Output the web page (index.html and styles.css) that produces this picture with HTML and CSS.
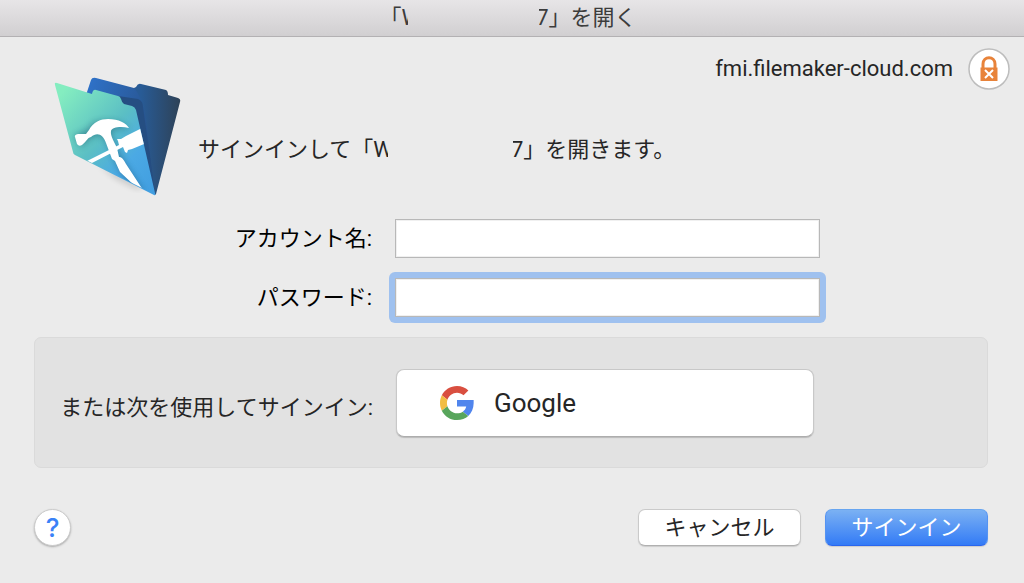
FILE: index.html
```html
<!DOCTYPE html>
<html lang="ja">
<head>
<meta charset="utf-8">
<meta name="viewport" content="width=device-width, initial-scale=1">
<title>サインイン</title>
<link rel="stylesheet" href="styles.css">
</head>
<body>
<header class="titlebar">
  <h1 class="titlebar-text">「<span class="masked masked-title"><span class="mask-start">W</span><span class="mask-end">7</span></span>」を開く</h1>
</header>
<main class="dialog">
  <section class="intro">
    <svg class="app-icon" viewBox="0 0 128 122" aria-hidden="true">
      <defs>
        <linearGradient id="front" x1="0" y1="0" x2="1" y2="1">
          <stop offset="0.08" stop-color="#84edc0"/>
          <stop offset="0.48" stop-color="#5bbfc4"/>
          <stop offset="0.72" stop-color="#4ba9e4"/>
          <stop offset="1" stop-color="#409de0"/>
        </linearGradient>
        <linearGradient id="back" x1="0" y1="0" x2="1" y2="0">
          <stop offset="0.3" stop-color="#285b96"/>
          <stop offset="1" stop-color="#2e4257"/>
        </linearGradient>
        <linearGradient id="middle" x1="0" y1="0" x2="1" y2="0.6">
          <stop offset="0" stop-color="#2f74cd"/>
          <stop offset="1" stop-color="#274d81"/>
        </linearGradient>
        <filter id="soft" x="-20%" y="-20%" width="140%" height="140%"><feGaussianBlur stdDeviation="3"/></filter>
        <clipPath id="face"><path d="M1 7 37 17 39 13 66 21 68 27 81 31 102 119 20 78Z"/></clipPath>
      </defs>
      <path d="M44 88 90 112 82 112 62 102Z" fill="#000" opacity=".22" filter="url(#soft)"/>
      <path d="M78 13 82 11 Q84 7 87 8L112 14Q114 15 114 19L124 22Q127 23 126 26L102 118Q101 120 99 116L70 20Z" fill="url(#back)"/>
      <path d="M33 16 37 4Q38 1 42 2L80 12Q89 22 92 45L101 119 78 80 66 30 30 22Z" fill="url(#middle)"/>
      <path d="M64 20 84 23Q89 25 89 31L101 119 80 31 68 28Z" fill="#254e82"/>
      <path d="M3 7Q0 6 1 9L19 76Q19 78 21 79L100 119Q102 120 101 117L82 34Q81 31 78 30L70 28Q68 27 67 23 66 20 64 20L42 14Q39 13 38 18Z" fill="url(#front)"/>
      <g clip-path="url(#face)">
        <path fill="#19506d" opacity=".45" filter="url(#soft)" d="M34 53C39 44 47 45 55 45 66 45 71 49 76 54 67 52 60 52 58 55 55 61 63 71 67 80L90 116 80 114 66 95 52 65C48 57 42 59 36 63L27 71 20 60Z"/>
        <path d="M33 85 65 69 64 65 63 63 67 63 72 60 90 51 95 66 78 73 74 74 73 77 71 76 69 71 36 88Z" fill="#fff"/>
        <path d="M35 54C39 46 47 43 54 43 65 43 72 47 75 52 67 50 58 51 57 55 56 60 61 67 63 72L65 81Q68 80 72 88L89 114 81 110 66 96 61 85 58 83 52 67C49 58 43 56 37 61 33 62 33 65 28 69Q25 71 23 68L21 61Q20 59 24 58L32 58Z" fill="#fff"/>
      </g>
    </svg>
    <div class="intro-body">
      <div class="server">
        <span>fmi.filemaker-cloud.com</span>
        <svg class="lock" viewBox="0 0 42 42" role="img" aria-label="保護されていない接続">
          <circle cx="21" cy="21" r="20" fill="#fff" stroke="#bdbdbd" stroke-width="1.5"/>
          <path d="M15 20V16C15 7.500 27 7.500 27 16V20" fill="none" stroke="#e8833a" stroke-width="3"/>
          <path d="M12.500 19.5h17V33h-17z" fill="#e8833a"/>
          <path d="m17 22 8 8m0-8-8 8" stroke="#fff" stroke-width="2"/>
        </svg>
      </div>
      <p class="message">サインインして「<span class="masked masked-message"><span class="mask-start">W</span><span class="mask-end">7</span></span>」を開きます。</p>
    </div>
  </section>
  <form class="signin">
    <div class="row">
      <label class="label" for="account">アカウント名:</label>
      <input class="field" id="account" type="text">
    </div>
    <div class="row">
      <label class="label" for="password">パスワード:</label>
      <div class="focus-ring"><input class="field" id="password" type="password"></div>
    </div>
    <div class="row provider">
      <span class="label provider-label" id="provider-label">または次を使用してサインイン:</span>
      <button class="google" type="button" aria-describedby="provider-label">
        <svg class="google-logo" viewBox="0 0 48 48" aria-hidden="true">
          <path fill="#d94f40" d="M24 9.5c3.54 0 6.71 1.22 9.21 3.6l6.85-6.85C35.9 2.38 30.47 0 24 0 14.62 0 6.51 5.38 2.56 13.22l7.98 6.19C12.43 13.72 17.74 9.5 24 9.5z"/>
          <path fill="#5085ed" d="M47.5 19.6H24v9.4h13c-.6 3-2.3 5.500-4.800 7.200l7.700 6c4.500-4.200 7.600-10.500 7.600-18z"/>
          <path fill="#f2bd42" d="M10.530 28.590c-.480-1.450-.760-2.990-.760-4.590s.270-3.140.760-4.590l-7.980-6.190C.920 16.460 0 20.120 0 24c0 3.880.920 7.540 2.560 10.780z"/>
          <path fill="#58a55c" d="M24 48c6.480 0 11.930-2.130 15.890-5.810l-7.730-6c-2.150 1.450-4.920 2.300-8.160 2.300-6.260 0-11.570-4.220-13.470-9.910l-7.980 6.190C6.510 42.620 14.620 48 24 48z"/>
        </svg>
        <span>Google</span>
      </button>
    </div>
    <div class="actions">
      <button class="help" type="button" aria-label="ヘルプ">?</button>
      <button class="button" type="button">キャンセル</button>
      <button class="button button-primary" type="submit">サインイン</button>
    </div>
  </form>
</main>
</body>
</html>
```

FILE: styles.css
```css
* {
  box-sizing: border-box;
}

body {
  margin: 0;
  background: #ebebeb;
  color: #262626;
  font: 22px/32px Roboto, "Noto Sans CJK JP", sans-serif;
}

button,
input {
  font: inherit;
  color: inherit;
}

.titlebar {
  height: 37px;
  padding-right: 8px;
  border-bottom: 1px solid #b3b1b3;
  background: linear-gradient(#e7e5e7, #d1cfd1);
  text-align: center;
}

.titlebar-text {
  margin: 0;
  font-size: 22px;
  font-weight: 400;
  line-height: 36px;
  color: #3c3c3c;
}

.masked {
  display: inline-flex;
  justify-content: space-between;
  vertical-align: bottom;
}

.masked-title {
  width: 147px;
}

.masked-message {
  width: 150px;
}

.mask-start,
.mask-end {
  display: flex;
  overflow: hidden;
}

.mask-start {
  width: 15px;
}

.masked-title .mask-start {
  width: 6px;
}

.mask-end {
  width: 10px;
  justify-content: flex-end;
}

.dialog {
  padding: 11px 14px 36px 34px;
}

.intro {
  display: flex;
  gap: 16px;
}

.app-icon {
  flex: none;
  width: 128px;
  height: 122px;
  margin: 28px 0 0 20px;
}

.intro-body {
  flex: 1;
}

.server {
  display: flex;
  align-items: center;
  justify-content: flex-end;
  gap: 15px;
}

.lock {
  width: 42px;
  height: 42px;
}

.message {
  margin: 44px 0 0;
}

.signin {
  padding: 21px 22px 0 0;
}

.row {
  display: grid;
  grid-template-columns: 338px 1fr;
  align-items: center;
  column-gap: 23px;
  padding-right: 168px;
  margin-bottom: 20px;
}

.label {
  text-align: right;
  color: #000;
}

.field {
  display: block;
  width: 100%;
  height: 39px;
  padding: 0 8px;
  border: 1px solid #b8b8b8;
  border-radius: 0;
  background: #fff;
  box-shadow: inset 0 0 0 1px #f0f0f0;
  outline: none;
}

.focus-ring {
  margin: -6px;
  padding: 6px;
  border-radius: 6px;
  background: #9fc1ef;
}

.provider {
  height: 131px;
  padding-right: 173px;
  border: 1px solid #dadada;
  border-radius: 7px;
  background: #e2e2e2;
  margin-bottom: 41px;
}

.provider-label {
  padding-top: 10px;
  color: #262626;
}

.google {
  display: flex;
  align-items: center;
  gap: 20px;
  height: 68px;
  padding: 0 43px;
  border: 1px solid #c8c8c8;
  border-bottom-color: #adadad;
  border-radius: 8px;
  background: #fff;
  box-shadow: 0 1px 1px #bbb;
  font-size: 26px;
}

.google-logo {
  width: 34px;
  height: 34px;
}

.actions {
  display: flex;
  align-items: center;
  gap: 24px;
}

.help {
  width: 37px;
  height: 37px;
  margin-right: auto;
  padding: 0;
  border: 1px solid #cbcbcb;
  border-radius: 50%;
  background: #fff;
  box-shadow: 0 1px 2px #aaa;
  color: #3b82f7;
  font-family: Inter, sans-serif;
  font-size: 26px;
  font-weight: 500;
}

.button {
  width: 163px;
  height: 37px;
  padding: 0;
  border: 1px solid #cacaca;
  border-bottom-color: #b0b0b0;
  border-radius: 7px;
  background: #fff;
  box-shadow: 0 1px 1px #ccc;
}

.button-primary {
  border-color: #67a5f0 #5593f2 #2a66ee;
  background: linear-gradient(#7bb1f3, #337bf6);
  color: #fff;
}
```
